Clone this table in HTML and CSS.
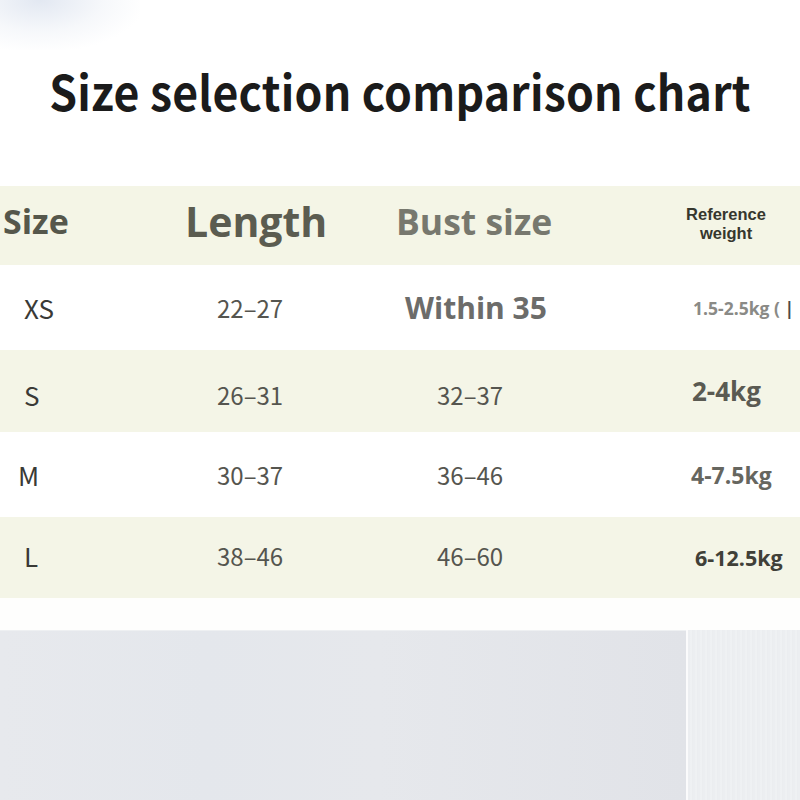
FILE: index.html
```html
<!DOCTYPE html>
<html lang="en">
<head>
<meta charset="utf-8">
<title>Size selection comparison chart</title>
<link rel="stylesheet" href="styles.css">
</head>
<body>
<div class="page">
  <div class="glow"></div>
  <header class="title-block">
    <h1 class="title">Size selection comparison chart</h1>
  </header>
  <div class="table">
    <div class="row head">
      <div class="c1 h-size">Size</div>
      <div class="c2 h-length">Length</div>
      <div class="c3 h-bust">Bust size</div>
      <div class="c4 h-weight"><span class="hw-line">Reference</span><span class="hw-line">weight</span></div>
    </div>
    <div class="row white r-xs">
      <div class="c1 sz">XS</div>
      <div class="c2 num">22–27</div>
      <div class="c3 within">Within 35</div>
      <div class="c4 w w-xs">1.5-2.5kg ( <span class="cut">|</span></div>
    </div>
    <div class="row cream r-s">
      <div class="c1 sz">S</div>
      <div class="c2 num">26–31</div>
      <div class="c3 num">32–37</div>
      <div class="c4 w w-s">2-4kg</div>
    </div>
    <div class="row white r-m">
      <div class="c1 sz sz-m">M</div>
      <div class="c2 num">30–37</div>
      <div class="c3 num">36–46</div>
      <div class="c4 w w-m">4-7.5kg</div>
    </div>
    <div class="row cream r-l">
      <div class="c1 sz sz-l">L</div>
      <div class="c2 num">38–46</div>
      <div class="c3 num">46–60</div>
      <div class="c4 w w-l">6-12.5kg</div>
    </div>
  </div>
  <div class="gap"></div>
  <div class="photo">
    <div class="photo-main"></div>
    <div class="photo-side"></div>
  </div>
</div>
</body>
</html>
```
FILE: styles.css
```css
html, body {
  margin: 0;
  padding: 0;
  background: #ffffff;
}
.page {
  width: 800px;
  height: 800px;
  overflow: hidden;
  position: relative;
  background: #ffffff;
  display: flex;
  flex-direction: column;
}
.glow {
  position: absolute;
  left: -60px;
  top: -50px;
  width: 200px;
  height: 100px;
  background: radial-gradient(ellipse at center, rgba(214,222,236,0.7) 0%, rgba(230,235,243,0.35) 45%, rgba(255,255,255,0) 75%);
  pointer-events: none;
}
.title-block {
  height: 186px;
  display: flex;
  align-items: center;
  justify-content: center;
  padding-bottom: 8px;
  box-sizing: border-box;
}
.title {
  margin: 0;
  font-family: "Noto Sans CJK SC", "Noto Sans", sans-serif;
  font-weight: 700;
  font-size: 44.6px;
  color: #1b1b1b;
  letter-spacing: 0.2px;
  transform: scaleY(1.08);
}
.table {
  display: flex;
  flex-direction: column;
}
.row {
  display: grid;
  grid-template-columns: 160px 220px 260px 160px;
  align-items: center;
}
.head { height: 79px; background: #f4f5e6; padding-bottom: 10px; box-sizing: border-box; }
.r-xs { height: 85px; }
.r-s { height: 82px; }
.r-m { height: 85px; }
.r-l { height: 81px; }
.white { background: #ffffff; }
.cream { background: #f4f5e7; }

.h-size, .h-length, .h-bust, .within, .w {
  font-family: "Open Sans", "Noto Sans", sans-serif;
  font-weight: 700;
}
.h-size {
  padding-left: 3px;
  font-size: 34px;
  color: #55574b;
}
.h-length {
  padding-left: 25px;
  font-size: 41px;
  color: #5b5c50;
}
.h-bust {
  padding-left: 16px;
  font-size: 35.5px;
  color: #77786e;
}
.h-weight {
  padding-left: 12px;
  padding-top: 6px;
  display: flex;
  flex-direction: column;
  align-items: center;
  font-family: "Liberation Sans", Arial, sans-serif;
  font-weight: 700;
  font-size: 16.5px;
  color: #36372e;
}
.hw-line {
  display: block;
  line-height: 18.5px;
  height: 18.5px;
}
.sz, .num {
  font-family: "Noto Sans CJK SC", "Noto Sans", sans-serif;
  font-weight: 400;
  font-size: 24px;
  color: #3a3a36;
}
.sz { padding-left: 24px; font-size: 26px; }
.sz-m { padding-left: 18px; }
.num { padding-left: 57px; color: #55554f; }
.within {
  padding-left: 25px;
  font-size: 30px;
  color: #6c6c6a;
}
.w { padding-left: 52px; }
.w-xs { font-size: 17.5px; color: #8a8a86; padding-left: 53px; white-space: nowrap; }
.cut { color: #4a4a46; font-weight: 700; }
.r-s .sz, .r-s .num { padding-top: 6px; }
.w-s { font-size: 26px; color: #5a5a52; }
.w-m { font-size: 23px; color: #66665f; padding-left: 51px; }
.w-l { font-size: 21.5px; color: #404038; padding-left: 55px; }
.r-l .sz, .r-l .num { padding-bottom: 4px; }

.gap {
  height: 32px;
  background: #fefefd;
}
.photo {
  flex: 1;
  display: flex;
}
.photo-main {
  width: 686px;
  background: linear-gradient(90deg, #e7e9ed 0%, #e4e7ec 30%, #e6e8ec 55%, #e1e3e8 100%);
  border-top: 1px solid #eef0f2;
}
.photo-side {
  flex: 1;
  border-left: 2px solid #fbfbfc;
  background: repeating-linear-gradient(90deg, #eceef1 0px, #eceef1 2px, #f1f3f5 3px, #e9ebee 5px);
}
```
